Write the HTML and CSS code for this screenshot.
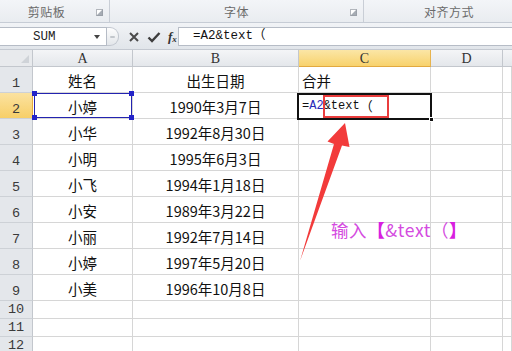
FILE: index.html
```html
<!DOCTYPE html>
<html lang="zh-CN">
<head>
<meta charset="utf-8">
<link rel="stylesheet" href="styles.css">
</head>
<body>
<div class="app">
  <div class="ribbon">
    <div class="group g-clip"><span class="glabel">剪贴板</span><span class="launch"></span></div>
    <div class="group g-font"><span class="glabel">字体</span><span class="launch"></span></div>
    <div class="group g-align"><span class="glabel">对齐方式</span></div>
  </div>
  <div class="fbar">
    <div class="namebox"><span class="nb-text">SUM</span><span class="nb-drop"></span></div>
    <div class="pill"><span class="pill-dot"></span></div>
    <div class="fbtns">
      <svg class="ico" width="12" height="12" viewBox="0 0 12 12"><path d="M2 2 L10 10 M10 2 L2 10" stroke="#4a4a4a" stroke-width="2" fill="none"/></svg>
      <svg class="ico" width="14" height="12" viewBox="0 0 14 12"><path d="M1.5 6.5 L5 10 L12.5 2" stroke="#3d3d3d" stroke-width="2.4" fill="none"/></svg>
      <span class="fx">f<sub>x</sub></span>
    </div>
    <div class="finput">=A2&amp;text（</div>
  </div>
  <div class="sheet">
    <div class="grid">
      <div class="corner"><span class="corner-tri"></span></div>
      <div class="ch">A</div>
      <div class="ch">B</div>
      <div class="ch ch-sel">C</div>
      <div class="ch">D</div>
      <div class="ch ch-last"></div>

      <div class="rh">1</div>
      <div class="c cc">姓名</div>
      <div class="c cc">出生日期</div>
      <div class="c cl">合并</div>
      <div class="c"></div>
      <div class="c"></div>

      <div class="rh rh-sel">2</div>
      <div class="c cc rel">小婷
        <span class="refbox"><i class="h h1"></i><i class="h h2"></i><i class="h h3"></i><i class="h h4"></i></span>
      </div>
      <div class="c cc">1990年3月7日</div>
      <div class="c cl rel mono"><span>=</span><span class="ref">A2</span><span>&amp;text</span><span class="cjkp">（</span>
        <span class="active"><i class="fill"></i></span>
        <span class="redbox"></span>
      </div>
      <div class="c"></div>
      <div class="c"></div>

      <div class="rh">3</div>
      <div class="c cc">小华</div>
      <div class="c cc">1992年8月30日</div>
      <div class="c"></div><div class="c"></div><div class="c"></div>

      <div class="rh">4</div>
      <div class="c cc">小明</div>
      <div class="c cc">1995年6月3日</div>
      <div class="c"></div><div class="c"></div><div class="c"></div>

      <div class="rh">5</div>
      <div class="c cc">小飞</div>
      <div class="c cc">1994年1月18日</div>
      <div class="c"></div><div class="c"></div><div class="c"></div>

      <div class="rh">6</div>
      <div class="c cc">小安</div>
      <div class="c cc">1989年3月22日</div>
      <div class="c"></div><div class="c"></div><div class="c"></div>

      <div class="rh">7</div>
      <div class="c cc">小丽</div>
      <div class="c cc">1992年7月14日</div>
      <div class="c"></div><div class="c"></div><div class="c"></div>

      <div class="rh">8</div>
      <div class="c cc">小婷</div>
      <div class="c cc">1997年5月20日</div>
      <div class="c"></div><div class="c"></div><div class="c"></div>

      <div class="rh">9</div>
      <div class="c cc">小美</div>
      <div class="c cc">1996年10月8日</div>
      <div class="c"></div><div class="c"></div><div class="c"></div>

      <div class="rh">10</div>
      <div class="c"></div><div class="c"></div><div class="c"></div><div class="c"></div><div class="c"></div>
      <div class="rh">11</div>
      <div class="c"></div><div class="c"></div><div class="c"></div><div class="c"></div><div class="c"></div>
      <div class="rh">12</div>
      <div class="c"></div><div class="c"></div><div class="c"></div><div class="c"></div><div class="c"></div>
    </div>
    <svg class="arrow" width="512" height="301" viewBox="0 50 512 301">
      <polygon points="300,261 334,144 327.5,141.5 345,123 349.5,147 342,145.5" fill="#f23b3b"/>
    </svg>
    <div class="note">输入<b>【</b>&amp;text（<b>】</b></div>
  </div>
</div>
</body>
</html>
```
FILE: styles.css
```css
* { box-sizing: border-box; }
html, body { margin: 0; padding: 0; }
body {
  width: 512px;
  height: 351px;
  overflow: hidden;
  background: #fff;
  font-family: "Noto Sans CJK SC", "Noto Sans", sans-serif;
}
.app { display: flex; flex-direction: column; width: 512px; height: 351px; }

/* ribbon group labels */
.ribbon {
  height: 23px;
  display: flex;
  background: linear-gradient(#f3f5f8, #e9ecf0);
  border-bottom: 1px solid #c6ccd5;
}
.group {
  position: relative;
  display: flex;
  align-items: center;
  justify-content: center;
  border-right: 1px solid #c9ced6;
  height: 100%;
}
.g-clip { width: 110px; padding-right: 16px; }
.g-font { width: 254px; }
.g-align { width: 148px; border-right: none; padding-left: 22px; }
.glabel { font-size: 12px; color: #6a6a6a; letter-spacing: 0.5px; }
.launch {
  position: absolute;
  right: 6px;
  top: 9px;
  width: 7px;
  height: 7px;
  border: 1px solid #b2b6bc;
  border-right-color: #9aa0a8;
  border-bottom-color: #9aa0a8;
  background: linear-gradient(135deg, #fff 45%, #a6acb4 55%);
}

/* formula bar */
.fbar {
  height: 27px;
  display: flex;
  align-items: center;
  padding: 1px 0 0 0;
  background: linear-gradient(#f1f3f6, #e1e5ea);
  border-bottom: 1px solid #c4c9d1;
}
.namebox {
  width: 107px;
  height: 19px;
  background: #fff;
  border: 1px solid #b6bcc6;
  border-left: none;
  display: flex;
  align-items: center;
  position: relative;
}
.nb-text {
  font-family: "Liberation Mono", monospace;
  font-size: 12.5px;
  color: #222;
  margin-left: 33px;
}
.nb-drop {
  position: absolute;
  left: 94px;
  top: 7px;
  border-left: 3.5px solid transparent;
  border-right: 3.5px solid transparent;
  border-top: 4px solid #444;
}
.pill {
  width: 13px;
  height: 19px;
  margin-left: -1px;
  border-radius: 0 9px 9px 0;
  border: 1px solid #c2c7cf;
  border-left: none;
  background: linear-gradient(#fdfdfd, #e3e6ea);
  display: flex;
  align-items: center;
  justify-content: center;
}
.pill-dot { width: 5px; height: 2px; background: #c3c7cc; border-radius: 1px; }
.fbtns {
  width: 60px;
  height: 19px;
  display: flex;
  align-items: center;
  gap: 7px;
  padding-left: 9px;
  border-right: 1px solid #b9bfc8;
}
.ico { display: block; }
.fx {
  font-family: "Liberation Serif", serif;
  font-style: italic;
  font-weight: bold;
  font-size: 13px;
  color: #333;
  line-height: 1;
}
.fx sub { font-size: 9px; vertical-align: -1px; }
.finput {
  flex: 1;
  height: 19px;
  background: #fff;
  border-top: 1px solid #b6bcc6;
  border-bottom: 1px solid #b6bcc6;
  font-family: "Liberation Mono", "Noto Sans CJK SC", monospace;
  font-size: 12.5px;
  line-height: 17px;
  color: #111;
  padding-left: 14px;
}

/* sheet */
.sheet { position: relative; flex: 1; overflow: hidden; }
.grid {
  display: grid;
  grid-template-columns: 33px 100px 166px 132px 72px 9px;
  grid-template-rows: 17px repeat(9, 26px) repeat(3, 18px);
}
.corner {
  background: #e8eaed;
  border-right: 1px solid #c3c7cd;
  border-bottom: 1px solid #c3c7cd;
  position: relative;
}
.corner-tri {
  position: absolute;
  right: 3px;
  bottom: 3px;
  border-left: 8px solid transparent;
  border-bottom: 8px solid #cfd3d8;
}
.ch {
  background: linear-gradient(#f4f5f7, #e4e7eb);
  border-right: 1px solid #c3c7cd;
  border-bottom: 1px solid #c3c7cd;
  font-family: "Liberation Serif", serif;
  font-size: 14px;
  color: #333;
  display: flex;
  justify-content: center;
  align-items: flex-end;
  line-height: 15px;
}
.ch-sel {
  background: linear-gradient(#fbe6a6, #f8d26c);
  border-right-color: #e7b34e;
  border-bottom-color: #e2a93f;
}
.ch-last { border-right: none; }
.rh {
  background: #e4e7eb;
  border-right: 1px solid #c3c7cd;
  border-bottom: 1px solid #cdd1d6;
  font-family: "Liberation Mono", monospace;
  font-size: 13.5px;
  color: #3a3a3a;
  display: flex;
  justify-content: center;
  align-items: flex-end;
  line-height: 16px;
}
.rh-sel {
  background: linear-gradient(#fbe2a0, #f7cf68);
  border-right-color: #e2a93f;
}
.c {
  border-right: 1px solid #d6d6d6;
  border-bottom: 1px solid #d6d6d6;
  font-size: 14.5px;
  color: #111;
  display: flex;
  align-items: flex-end;
  padding-bottom: 2px;
  line-height: 18px;
  white-space: nowrap;
}
.cc { justify-content: center; }
.cl { justify-content: flex-start; padding-left: 3px; }
.rel { position: relative; }
.mono {
  font-family: "Liberation Mono", monospace;
  font-size: 12px;
  padding-bottom: 3px;
}
.ref { color: #2a2ab8; }
.cjkp { font-family: "Noto Sans CJK SC", sans-serif; font-size: 13px; }

.refbox {
  position: absolute;
  left: 1px;
  top: 0px;
  right: 0px;
  bottom: 0px;
  border: 1px solid #2323b0;
}
.h {
  position: absolute;
  width: 5px;
  height: 5px;
  background: #2323c8;
}
.h1 { left: -3px; top: -3px; }
.h2 { right: -3px; top: -3px; }
.h3 { left: -3px; bottom: -3px; }
.h4 { right: -3px; bottom: -3px; }

.active {
  position: absolute;
  left: -2px;
  top: 0px;
  right: -2px;
  bottom: -2px;
  border: 2px solid #111;
}
.fill {
  position: absolute;
  right: -4px;
  bottom: -4px;
  width: 5px;
  height: 5px;
  background: #111;
  border: 1px solid #fff;
}
.redbox {
  position: absolute;
  left: 24px;
  top: 2px;
  width: 66px;
  height: 23px;
  border: 2px solid #ea3d3d;
}

.arrow { position: absolute; left: 0; top: 0; }
.note {
  position: absolute;
  left: 331px;
  top: 169px;
  font-size: 17.5px;
  line-height: 22px;
  letter-spacing: 0.6px;
  color: #d44ae0;
  white-space: nowrap;
}
.note b { color: #d81fe0; font-weight: 900; }
```
